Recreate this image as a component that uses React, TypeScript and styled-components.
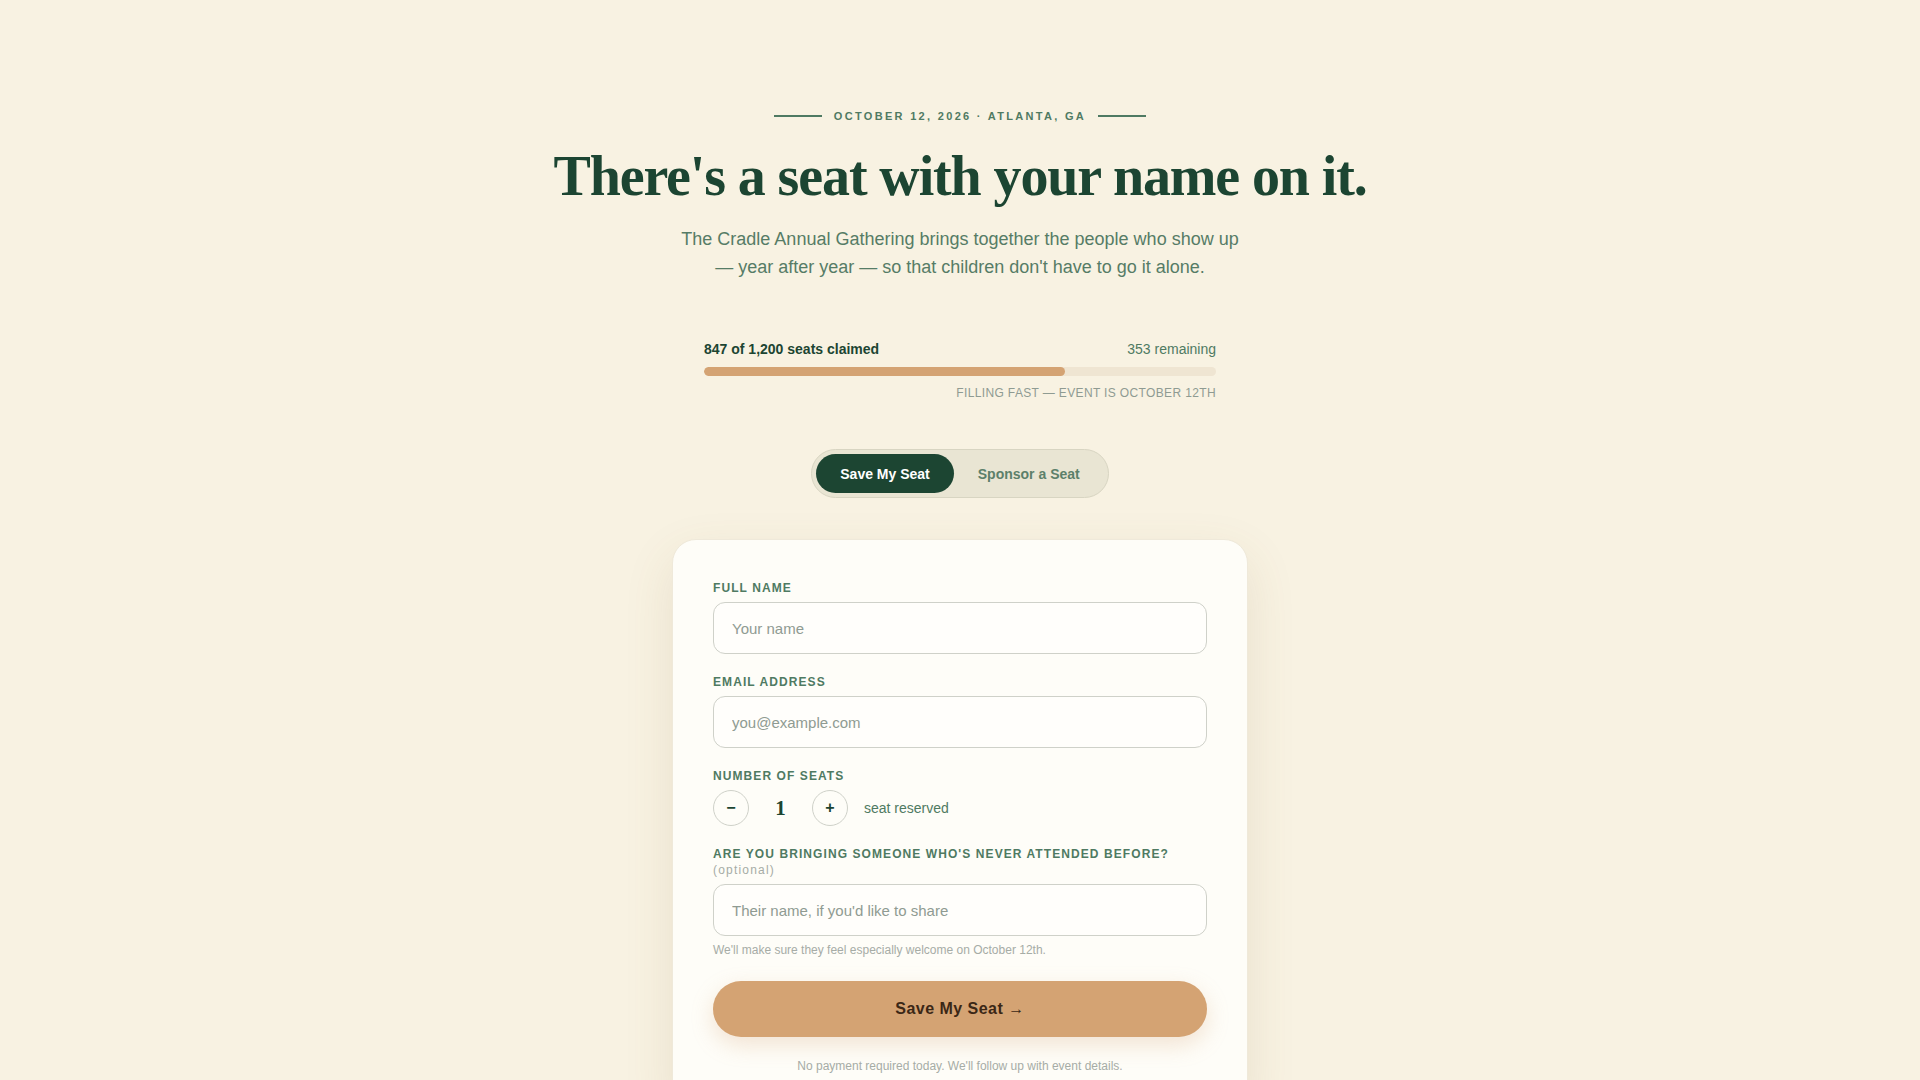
import React, { useState } from "react";
import styled, { createGlobalStyle } from "styled-components";

const COLORS = {
  PAGE: "#f8f2e2",
  CARD: "#fefdf8",
  FOREST: "#1c4532",
  SAGE: "#4f7a62",
  SAGE_SOFT: "#5c806a",
  MUTED: "#8f9b92",
  FAINT: "#a6aca6",
  SAND: "#d4a373",
  TRACK: "#efe5d2",
  BORDER: "#cfd1c9",
};

const TOTAL_SEATS = 1200;
const CLAIMED_SEATS = 847;

const GlobalStyle = createGlobalStyle`
  html, body {
    margin: 0;
    padding: 0;
    background: ${COLORS.PAGE};
    font-family: "Liberation Sans", Arial, sans-serif;
  }

  * {
    box-sizing: border-box;
  }
`;

const Page = styled.main`
  min-height: 100vh;
  padding: 108px 20px 60px;
  display: flex;
  flex-direction: column;
  align-items: center;
`;

const Eyebrow = styled.div`
  display: flex;
  align-items: center;
  gap: 12px;
  font-size: 11px;
  line-height: 16px;
  font-weight: 700;
  letter-spacing: 0.21em;
  color: ${COLORS.SAGE};

  &::before,
  &::after {
    content: "";
    width: 48px;
    height: 2px;
    background: ${COLORS.SAGE};
  }
`;

const Headline = styled.h1`
  margin: 21px 0 0;
  font-family: "Liberation Serif", "Times New Roman", serif;
  font-size: 56px;
  line-height: 62px;
  font-weight: 700;
  letter-spacing: -0.02em;
  color: ${COLORS.FOREST};
  text-align: center;
`;

const Lede = styled.p`
  margin: 18px 0 0;
  max-width: 560px;
  font-size: 18px;
  line-height: 28px;
  color: #567c66;
  text-align: center;
`;

const Progress = styled.section`
  width: 512px;
  margin-top: 59px;
`;

const ProgressHead = styled.div`
  display: flex;
  justify-content: space-between;
  align-items: baseline;
  font-size: 14px;
  line-height: 18px;
`;

const Claimed = styled.span`
  font-weight: 700;
  color: ${COLORS.FOREST};
`;

const Remaining = styled.span`
  color: ${COLORS.SAGE};
`;

const Track = styled.div`
  margin-top: 9px;
  height: 9px;
  border-radius: 999px;
  background: ${COLORS.TRACK};
  overflow: hidden;
`;

const Fill = styled.div`
  height: 100%;
  border-radius: 999px;
  background: ${COLORS.SAND};
`;

const Urgency = styled.div`
  margin-top: 9px;
  text-align: right;
  font-size: 12px;
  line-height: 16px;
  letter-spacing: 0.03em;
  color: ${COLORS.MUTED};
`;

const Tabs = styled.div`
  margin-top: 48px;
  display: flex;
  padding: 4px;
  border: 1px solid #d8d5c2;
  border-radius: 999px;
  background: #e9e5d3;
`;

const Tab = styled.button<{ $active: boolean }>`
  height: 39px;
  padding: 0 24px;
  border: none;
  border-radius: 999px;
  font-family: inherit;
  font-size: 14px;
  font-weight: 700;
  cursor: pointer;
  background: ${({ $active }) => ($active ? COLORS.FOREST : "transparent")};
  color: ${({ $active }) => ($active ? "#ffffff" : COLORS.SAGE_SOFT)};
`;

const Card = styled.form`
  width: 576px;
  margin-top: 41px;
  padding: 40px 40px 36px;
  border-radius: 24px;
  background: ${COLORS.CARD};
  border: 1px solid #efe9da;
  box-shadow: 0 18px 50px rgba(120, 96, 50, 0.12);
  display: flex;
  flex-direction: column;
  gap: 20px;
`;

const Field = styled.div`
  display: flex;
  flex-direction: column;
`;

const Label = styled.label`
  margin-bottom: 6px;
  font-size: 12px;
  line-height: 16px;
  font-weight: 700;
  letter-spacing: 0.09em;
  text-transform: uppercase;
  color: ${COLORS.SAGE};
`;

const Optional = styled.span`
  font-weight: 400;
  letter-spacing: 0.1em;
  text-transform: none;
  color: ${COLORS.FAINT};
`;

const TextInput = styled.input`
  height: 52px;
  width: 100%;
  padding: 0 18px;
  border: 1px solid ${COLORS.BORDER};
  border-radius: 12px;
  background: #fffefb;
  font-family: inherit;
  font-size: 15px;
  color: ${COLORS.FOREST};
  outline: none;

  &::placeholder {
    color: ${COLORS.MUTED};
  }
`;

const Stepper = styled.div`
  display: flex;
  align-items: center;
`;

const RoundButton = styled.button`
  width: 36px;
  height: 36px;
  border-radius: 50%;
  border: 1px solid ${COLORS.BORDER};
  background: transparent;
  display: flex;
  align-items: center;
  justify-content: center;
  font-family: inherit;
  font-size: 16px;
  font-weight: 700;
  color: ${COLORS.FOREST};
  cursor: pointer;
  padding: 0;
`;

const Count = styled.span`
  width: 63px;
  text-align: center;
  font-family: "Liberation Serif", "Times New Roman", serif;
  font-size: 21px;
  font-weight: 700;
  color: ${COLORS.FOREST};
`;

const CountNote = styled.span`
  margin-left: 16px;
  font-size: 14px;
  color: ${COLORS.SAGE};
`;

const Hint = styled.p`
  margin: 7px 0 0;
  font-size: 12px;
  line-height: 14px;
  color: ${COLORS.FAINT};
`;

const Submit = styled.button`
  margin-top: 4px;
  height: 56px;
  width: 100%;
  border: none;
  border-radius: 999px;
  background: ${COLORS.SAND};
  box-shadow: 0 8px 22px rgba(212, 163, 115, 0.28);
  font-family: inherit;
  font-size: 16px;
  font-weight: 700;
  letter-spacing: 0.03em;
  color: #3b2716;
  cursor: pointer;
`;

const FinePrint = styled.p`
  margin: 2px 0 0;
  text-align: center;
  font-size: 12px;
  line-height: 14px;
  color: ${COLORS.FAINT};
`;

export default function App() {
  const [mode, setMode] = useState<"save" | "sponsor">("save");
  const [seats, setSeats] = useState(1);

  const pct = (CLAIMED_SEATS / TOTAL_SEATS) * 100;

  return (
    <>
      <GlobalStyle />
      <Page>
        <Eyebrow>OCTOBER 12, 2026 · ATLANTA, GA</Eyebrow>
        <Headline>There's a seat with your name on it.</Headline>
        <Lede>
          The Cradle Annual Gathering brings together the people who show up — year after
          year — so that children don't have to go it alone.
        </Lede>

        <Progress>
          <ProgressHead>
            <Claimed>
              {CLAIMED_SEATS} of {TOTAL_SEATS.toLocaleString("en-US")} seats claimed
            </Claimed>
            <Remaining>{TOTAL_SEATS - CLAIMED_SEATS} remaining</Remaining>
          </ProgressHead>
          <Track>
            <Fill style={{ width: `${pct}%` }} />
          </Track>
          <Urgency>FILLING FAST — EVENT IS OCTOBER 12TH</Urgency>
        </Progress>

        <Tabs>
          <Tab type="button" $active={mode === "save"} onClick={() => setMode("save")}>
            Save My Seat
          </Tab>
          <Tab type="button" $active={mode === "sponsor"} onClick={() => setMode("sponsor")}>
            Sponsor a Seat
          </Tab>
        </Tabs>

        <Card onSubmit={(e) => e.preventDefault()}>
          <Field>
            <Label htmlFor="name">Full Name</Label>
            <TextInput id="name" placeholder="Your name" />
          </Field>

          <Field>
            <Label htmlFor="email">Email Address</Label>
            <TextInput id="email" type="email" placeholder="you@example.com" />
          </Field>

          <Field>
            <Label>Number of Seats</Label>
            <Stepper>
              <RoundButton type="button" onClick={() => setSeats((n) => Math.max(1, n - 1))}>
                −
              </RoundButton>
              <Count>{seats}</Count>
              <RoundButton type="button" onClick={() => setSeats((n) => n + 1)}>
                +
              </RoundButton>
              <CountNote>{seats === 1 ? "seat reserved" : "seats reserved"}</CountNote>
            </Stepper>
          </Field>

          <Field>
            <Label htmlFor="guest">
              Are you bringing someone who's never attended before?{" "}
              <Optional>(optional)</Optional>
            </Label>
            <TextInput id="guest" placeholder="Their name, if you'd like to share" />
            <Hint>We'll make sure they feel especially welcome on October 12th.</Hint>
          </Field>

          <Submit type="submit">Save My Seat →</Submit>
          <FinePrint>No payment required today. We'll follow up with event details.</FinePrint>
        </Card>
      </Page>
    </>
  );
}
